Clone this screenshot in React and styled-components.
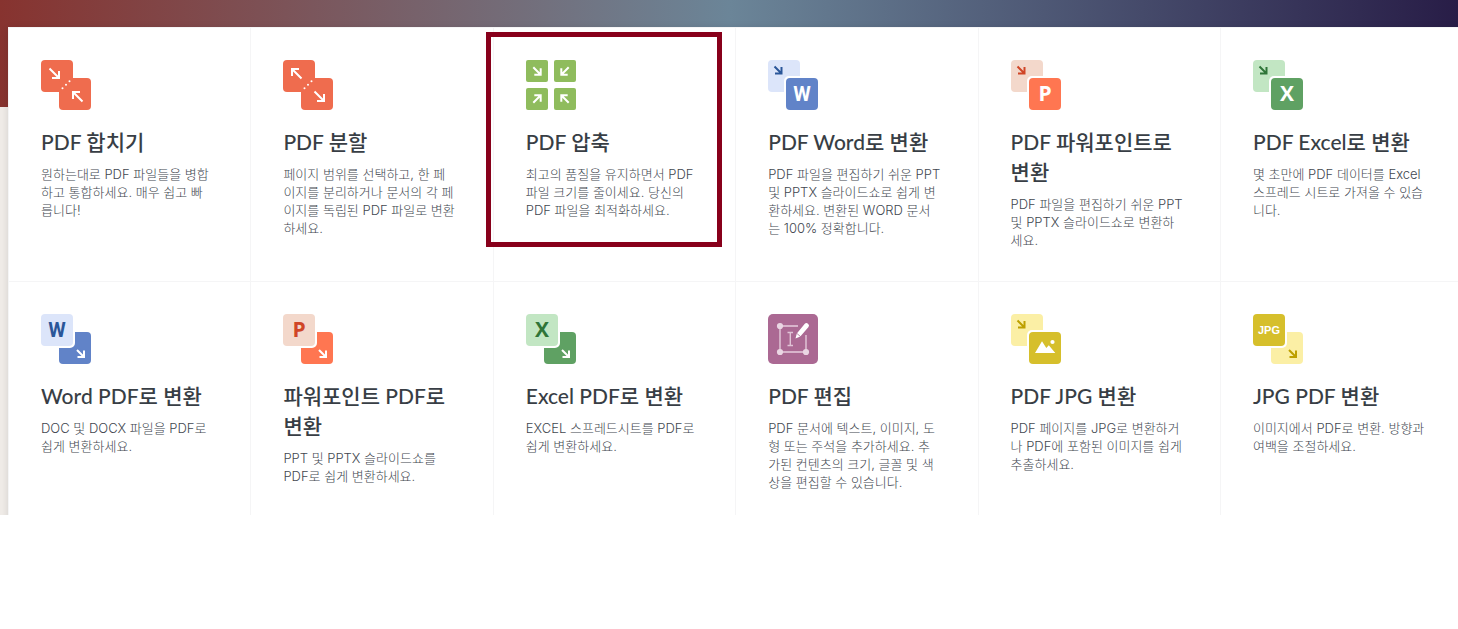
import React from 'react';
import styled, { createGlobalStyle } from 'styled-components';


const GlobalStyle = createGlobalStyle`
  * {
    box-sizing: border-box;
  }

  body {
    margin: 0;
    background: #fff;
    font-family: Lato, "Noto Sans CJK KR", sans-serif;
  }
`;

const Page = styled.main`
  display: grid;
  grid-template-rows: 107px auto;
  height: 515px;
  overflow: hidden;
  background: #f0ece8;
`;

const Hero = styled.div`
  grid-area: 1 / 1;
  background: linear-gradient(90deg, #87332f 0%, #6b8598 50%, #281d47 100%);
`;

const Tools = styled.nav`
  grid-area: 1 / 1 / 3 / 2;
  display: grid;
  grid-template-columns: repeat(6, 16.66%);
  grid-auto-rows: 254px;
  margin: 27px -5px 0 8px;
  background: #fff;
  box-shadow: 0 2px 8px rgba(0, 0, 0, 0.12);
`;

const Tool = styled.a`
  position: relative;
  padding: 32px;
  border-top: 1px solid #f5f5f6;
  border-left: 1px solid #f5f5f6;
  color: #383e45;
  text-decoration: none;
`;

const Title = styled.h3`
  margin: 17px 0 8px;
  font-size: 21px;
  font-weight: 500;
  line-height: 30px;
  white-space: pre;
`;

const Description = styled.p`
  margin: 0;
  color: #42474f;
  font-family: Inter, "Noto Sans CJK KR", sans-serif;
  font-size: 13px;
  font-weight: 300;
  line-height: 18px;
  white-space: pre;
`;

const Highlight = styled.span`
  position: absolute;
  top: 4px;
  left: -8px;
  right: 13px;
  height: 215px;
  border: 5px solid #88001b;
`;

const Icon = styled.svg`
  display: block;
  width: 50px;
  height: 50px;
`;

const word = { dark: '#6183c8', light: '#dce5fa', ink: '#2a5699', letter: 'W', font: 'Roboto', size: 20 };
const powerpoint = { dark: '#ff7651', light: '#f3d8cb', ink: '#d04526', letter: 'P', font: 'Open Sans', size: 21 };
const excel = { dark: '#5fa163', light: '#c2e6c3', ink: '#2f7538', letter: 'X', font: 'Open Sans', size: 21 };
const jpg = { dark: '#d6bf2b', light: '#fbefa5', ink: '#bda000' };

const Arrow = ({ d, color = '#fff', width = 2 }) => (
  <path d={d} fill="none" stroke={color} strokeWidth={width} />
);

const Letter = ({ x, y, color, kind }) => (
  <text
    x={x}
    y={y}
    fill={color}
    fontFamily={`"${kind.font}", sans-serif`}
    fontSize={kind.size}
    fontWeight="700"
    textAnchor="middle"
  >
    {kind.letter}
  </text>
);

const MergeIcon = ({ split }) => (
  <Icon viewBox="0 0 50 50" aria-hidden="true">
    <rect width="32" height="32" rx="4" fill="#ef6c4e" />
    <rect x="18" y="18" width="32" height="32" rx="4" fill="#ef6c4e" />
    <Arrow d={split ? 'M18.5 18.5L9 9M9 16V9H16' : 'M8.5 8.5L18 18M11 18H18V11'} />
    <Arrow d={split ? 'M31.5 31.5L41 41M34 41H41V34' : 'M41.5 41.5L32 32M32 39V32H39'} />
    <circle cx="21.5" cy="28.3" r="1" fill="#fff" />
    <circle cx="25" cy="24.8" r="1" fill="#fff" />
    <circle cx="28.5" cy="21.3" r="1" fill="#fff" />
  </Icon>
);

const CompressIcon = () => (
  <Icon viewBox="0 0 50 50" aria-hidden="true">
    <rect width="22" height="22" rx="2" fill="#8fbc5d" />
    <rect x="28" width="22" height="22" rx="2" fill="#8fbc5d" />
    <rect y="28" width="22" height="22" rx="2" fill="#8fbc5d" />
    <rect x="28" y="28" width="22" height="22" rx="2" fill="#8fbc5d" />
    <Arrow d="M7.3 7.3L14.7 14.7M8.3 14.7H14.7V8.3" />
    <Arrow d="M42.7 7.3L35.3 14.7M41.7 14.7H35.3V8.3" />
    <Arrow d="M7.3 42.7L14.7 35.3M8.3 35.3H14.7V41.7" />
    <Arrow d="M42.7 42.7L35.3 35.3M41.7 35.3H35.3V41.7" />
  </Icon>
);

const FromPdfIcon = ({ kind }) => (
  <Icon viewBox="0 0 50 50" aria-hidden="true">
    <rect width="32" height="32" rx="4" fill={kind.light} />
    <Arrow d="M6.5 6.5L13.5 13.5M7 13.5H13.5V7" color={kind.ink} />
    <rect x="16" y="16" width="36" height="36" rx="5" fill="#fff" />
    <rect x="18" y="18" width="32" height="32" rx="4" fill={kind.dark} />
    {kind.letter ? (
      <Letter x="34" y="41" color="#fff" kind={kind} />
    ) : (
      <g fill="#fff">
        <path d="M24 39L31 27.3L35.3 34L37.8 31.3L44.3 39Z" />
        <circle cx="41.5" cy="28" r="2.1" />
      </g>
    )}
  </Icon>
);

const ToPdfIcon = ({ kind }) => (
  <Icon viewBox="0 0 50 50" aria-hidden="true">
    <rect x="18" y="18" width="32" height="32" rx="4" fill={kind.letter ? kind.dark : kind.light} />
    <Arrow d="M36 36L43 43M36.5 43H43V36.5" color={kind.letter ? '#fff' : kind.ink} />
    <rect x="-2" y="-2" width="36" height="36" rx="5" fill="#fff" />
    <rect width="32" height="32" rx="4" fill={kind.letter ? kind.light : kind.dark} />
    {kind.letter ? (
      <Letter x="16" y="23" color={kind.ink} kind={kind} />
    ) : (
      <text
        x="16"
        y="20"
        fill="#fff"
        fontFamily='"Liberation Sans", sans-serif'
        fontSize="11"
        fontWeight="700"
        textAnchor="middle"
      >
        JPG
      </text>
    )}
  </Icon>
);

const EditIcon = () => (
  <Icon viewBox="0 0 50 50" aria-hidden="true">
    <rect width="50" height="50" rx="5" fill="#ab6993" />
    <path d="M30 12H12V38H38V21" fill="none" stroke="#d8b4cb" strokeWidth="1.8" />
    <g fill="#ead6e3">
      <circle cx="12" cy="12" r="3.1" />
      <circle cx="12" cy="38" r="3.1" />
      <circle cx="38" cy="38" r="3.1" />
    </g>
    <path d="M19.5 18.5H25M22.3 18.5V31.5M19.5 31.5H25" fill="none" stroke="#e0c3d6" strokeWidth="1.4" />
    <path d="M27.5 24.5L28.8 19.5L36.8 9.8Q38.3 8.3 40 9.8Q41.8 11.3 40.5 13L32.3 22.5Z" fill="#fff" />
    <path d="M28.6 19.2L32.8 22.8" stroke="#ab6993" strokeWidth="0.8" />
  </Icon>
);

const tools = [
  {
    icon: <MergeIcon />,
    title: 'PDF 합치기',
    text: '원하는대로 PDF 파일들을 병합\n하고 통합하세요. 매우 쉽고 빠\n릅니다!',
  },
  {
    icon: <MergeIcon split />,
    title: 'PDF 분할',
    text: '페이지 범위를 선택하고, 한 페\n이지를 분리하거나 문서의 각 페\n이지를 독립된 PDF 파일로 변환\n하세요.',
  },
  {
    icon: <CompressIcon />,
    title: 'PDF 압축',
    text: '최고의 품질을 유지하면서 PDF\n파일 크기를 줄이세요. 당신의\nPDF 파일을 최적화하세요.',
    highlighted: true,
  },
  {
    icon: <FromPdfIcon kind={word} />,
    title: 'PDF Word로 변환',
    text: 'PDF 파일을 편집하기 쉬운 PPT\n및 PPTX 슬라이드쇼로 쉽게 변\n환하세요. 변환된 WORD 문서\n는 100% 정확합니다.',
  },
  {
    icon: <FromPdfIcon kind={powerpoint} />,
    title: 'PDF 파워포인트로\n변환',
    text: 'PDF 파일을 편집하기 쉬운 PPT\n및 PPTX 슬라이드쇼로 변환하\n세요.',
  },
  {
    icon: <FromPdfIcon kind={excel} />,
    title: 'PDF Excel로 변환',
    text: '몇 초만에 PDF 데이터를 Excel\n스프레드 시트로 가져올 수 있습\n니다.',
  },
  {
    icon: <ToPdfIcon kind={word} />,
    title: 'Word PDF로 변환',
    text: 'DOC 및 DOCX 파일을 PDF로\n쉽게 변환하세요.',
  },
  {
    icon: <ToPdfIcon kind={powerpoint} />,
    title: '파워포인트 PDF로\n변환',
    text: 'PPT 및 PPTX 슬라이드쇼를\nPDF로 쉽게 변환하세요.',
  },
  {
    icon: <ToPdfIcon kind={excel} />,
    title: 'Excel PDF로 변환',
    text: 'EXCEL 스프레드시트를 PDF로\n쉽게 변환하세요.',
  },
  {
    icon: <EditIcon />,
    title: 'PDF 편집',
    text: 'PDF 문서에 텍스트, 이미지, 도\n형 또는 주석을 추가하세요. 추\n가된 컨텐츠의 크기, 글꼴 및 색\n상을 편집할 수 있습니다.',
  },
  {
    icon: <FromPdfIcon kind={jpg} />,
    title: 'PDF JPG 변환',
    text: 'PDF 페이지를 JPG로 변환하거\n나 PDF에 포함된 이미지를 쉽게\n추출하세요.',
  },
  {
    icon: <ToPdfIcon kind={jpg} />,
    title: 'JPG PDF 변환',
    text: '이미지에서 PDF로 변환. 방향과\n여백을 조절하세요.',
  },
];

const App = () => (
  <>
    <GlobalStyle />
    <Page>
      <Hero />
      <Tools>
        {tools.map(({ icon, title, text, highlighted }) => (
          <Tool href="#" key={title}>
            {icon}
            <Title>{title}</Title>
            <Description>{text}</Description>
            {highlighted && <Highlight />}
          </Tool>
        ))}
      </Tools>
    </Page>
  </>
);

export default App;
